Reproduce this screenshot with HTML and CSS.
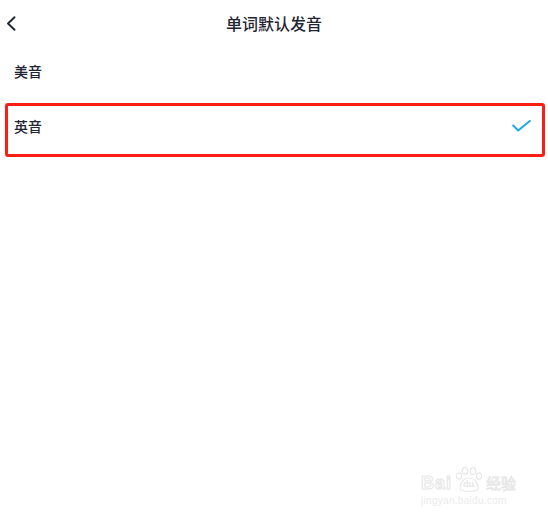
FILE: index.html
```html
<!DOCTYPE html>
<html lang="zh-CN">
<head>
    <meta charset="UTF-8">
    <meta name="viewport" content="width=device-width, initial-scale=1.0">
    <title>单词默认发音</title>
    <link rel="stylesheet" href="styles.css">
</head>
<body>

    <!-- 顶部导航 -->
    <header class="topbar">
        <a href="#" class="voltar">
            <svg width="10" height="15" viewBox="0 0 10 15">
                <path d="M8.5 1.2 L2 7.5 L8.5 13.8" fill="none" stroke="#1f2533" stroke-width="1.9" stroke-linecap="round" stroke-linejoin="round"/>
            </svg>
        </a>
        <h1 class="titulo">单词默认发音</h1>
    </header>

    <!-- 选项列表 -->
    <div class="lista">
        <div class="opcao">美音</div>
        <div class="opcao opcao-marcada">
            <div class="opcao-linha">
                <span>英音</span>
                <svg class="check" width="19" height="12" viewBox="0 0 19 12">
                    <path d="M1.2 5.5 L6.2 10.5 L17.8 1" fill="none" stroke="#1aa9ef" stroke-width="2" stroke-linecap="round" stroke-linejoin="round"/>
                </svg>
            </div>
        </div>
    </div>

    <!-- 水印 -->
    <div class="marca">
        <div class="marca-linha">
            <span class="marca-bai">Bai</span>
            <span class="marca-pata">
                <svg width="30" height="26" viewBox="0 0 30 26">
                    <g fill="none" stroke="#e8e8e8" stroke-width="1.2">
                        <ellipse cx="5" cy="9" rx="2.6" ry="3.2"/>
                        <ellipse cx="11" cy="4" rx="2.8" ry="3.4"/>
                        <ellipse cx="19" cy="4" rx="2.8" ry="3.4"/>
                        <ellipse cx="25" cy="9" rx="2.6" ry="3.2"/>
                        <path d="M6 22 C6 14 11 11 15 11 C19 11 24 14 24 22 C24 25 6 25 6 22 Z"/>
                    </g>
                </svg>
                <span class="marca-du">du</span>
            </span>
            <span class="marca-jy">经验</span>
        </div>
        <div class="marca-url">jingyan.baidu.com</div>
    </div>

</body>
</html>
```

FILE: styles.css
```css
body {
    font-family: "Noto Sans CJK SC", "Noto Sans", sans-serif;
    background-color: #fff;
    margin: 0;
    padding: 0;
    color: #1f2533;
    width: 548px;
    height: 522px;
    position: relative;
    overflow: hidden;
}

.topbar {
    height: 46px;
    display: flex;
    align-items: center;
    justify-content: center;
    position: relative;
}

.voltar {
    position: absolute;
    left: 6px;
    top: 16px;
    display: flex;
}

.titulo {
    margin: 0;
    font-size: 16px;
    font-weight: 500;
    line-height: 20px;
}

.opcao {
    height: 50px;
    padding-left: 14px;
    display: flex;
    align-items: center;
    font-size: 14px;
    font-weight: 500;
    line-height: 20px;
}

.opcao-marcada {
    height: auto;
    display: block;
    margin: 7px 3px 0 5px;
    border: 3px solid #fb1e14;
    border-radius: 3px;
    padding: 10px 11px 18px 6px;
}

.opcao-linha {
    display: flex;
    justify-content: space-between;
    align-items: center;
    height: 20px;
}

.check {
    margin-top: -1px;
}

/* 水印 */
.marca {
    position: absolute;
    left: 421px;
    top: 463px;
    color: #ececec;
    font-family: "Liberation Sans", sans-serif;
}

.marca-linha {
    display: flex;
    align-items: flex-end;
    height: 30px;
}

.marca-bai {
    font-size: 18px;
    font-weight: bold;
    line-height: 20px;
    letter-spacing: 1px;
    color: transparent;
    -webkit-text-stroke: 1px #e6e6e6;
}

.marca-pata {
    position: relative;
    width: 30px;
    height: 26px;
    margin-left: 2px;
}

.marca-du {
    position: absolute;
    left: 9px;
    top: 12px;
    font-size: 9px;
    font-weight: bold;
    color: #e6e6e6;
}

.marca-jy {
    font-family: "Noto Sans CJK SC", sans-serif;
    font-size: 15px;
    line-height: 20px;
    margin-left: 2px;
    color: transparent;
    -webkit-text-stroke: 0.8px #e6e6e6;
}

.marca-url {
    font-size: 10px;
    margin-top: 2px;
    letter-spacing: 0.3px;
    color: #ebebeb;
}
```
